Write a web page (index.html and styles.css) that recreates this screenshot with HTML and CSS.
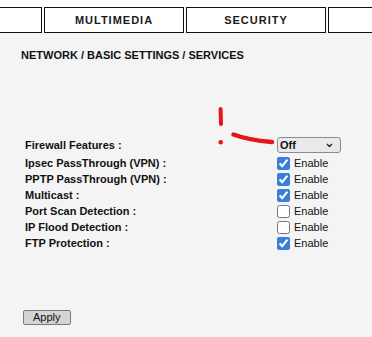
FILE: index.html
```html
<!DOCTYPE html>
<html lang="en">
<head>
<meta charset="UTF-8">
<title>Services</title>
<link rel="stylesheet" href="styles.css">
</head>
<body>
<div class="nav">
  <div class="tabs">
    <div class="tab"></div>
    <div class="tab">MULTIMEDIA</div>
    <div class="tab">SECURITY</div>
    <div class="tab"></div>
  </div>
</div>

<div class="content">
  <h1 class="crumb">NETWORK / BASIC SETTINGS / SERVICES</h1>

  <form class="form">
    <div class="row row-first">
      <label>Firewall Features :</label>
      <div class="pick">
        <select class="select">
          <option>Off</option>
          <option>On</option>
        </select>
        <svg class="chev" width="7" height="5" viewBox="0 0 7 5"><path d="M1 1 L3.5 3.5 L6 1" fill="none" stroke="#222" stroke-width="1.3"/></svg>
      </div>
    </div>
    <div class="row">
      <label>Ipsec PassThrough (VPN) :</label>
      <div class="opt"><input type="checkbox" checked><span>Enable</span></div>
    </div>
    <div class="row">
      <label>PPTP PassThrough (VPN) :</label>
      <div class="opt"><input type="checkbox" checked><span>Enable</span></div>
    </div>
    <div class="row">
      <label>Multicast :</label>
      <div class="opt"><input type="checkbox" checked><span>Enable</span></div>
    </div>
    <div class="row">
      <label>Port Scan Detection :</label>
      <div class="opt"><input type="checkbox"><span>Enable</span></div>
    </div>
    <div class="row">
      <label>IP Flood Detection :</label>
      <div class="opt"><input type="checkbox"><span>Enable</span></div>
    </div>
    <div class="row">
      <label>FTP Protection :</label>
      <div class="opt"><input type="checkbox" checked><span>Enable</span></div>
    </div>

    <button type="button" class="apply">Apply</button>
  </form>
</div>

<!-- hand drawn mark -->
<svg class="mark" width="70" height="50" viewBox="0 0 70 50">
  <path d="M10.6 9 L11 24" fill="none" stroke="#e8131b" stroke-width="4" stroke-linecap="round"/>
  <circle cx="10.7" cy="42.3" r="2.3" fill="#e8131b"/>
  <path d="M23.5 34.5 Q38 40 62 42" fill="none" stroke="#e8131b" stroke-width="4.5" stroke-linecap="round"/>
</svg>
</body>
</html>
```

FILE: styles.css
```css
body{
  margin: 0;
  background: #f4f4f4;
  color: #111;
  font-family: "Liberation Sans", Arial, sans-serif;
  font-size: 11px;
  position: relative;
}
.nav{
  overflow: hidden;
  background: #fff;
}
.tabs{
  display: flex;
  gap: 2px;
  margin-left: -98px;
  padding-top: 7px;
}
.tab{
  flex: 0 0 140px;
  height: 26px;
  box-sizing: border-box;
  border: 1px solid #111;
  background: #fff;
  display: flex;
  align-items: center;
  justify-content: center;
  font-weight: bold;
  letter-spacing: 1px;
  color: #1a1a1a;
}
.content{
  padding-left: 21px;
}
.crumb{
  margin: 16px 0 0;
  font-size: 11px;
  line-height: 13px;
  font-weight: bold;
}
.form{
  margin: 75px 0 0 4px;
}
.row{
  display: grid;
  grid-template-columns: 252px auto;
  align-items: center;
  height: 16px;
}
.row-first{
  margin-bottom: 2px;
}
.row label{
  font-weight: bold;
  line-height: 16px;
}
.pick{
  position: relative;
  width: 64px;
}
.select{
  appearance: none;
  -webkit-appearance: none;
  width: 64px;
  height: 16px;
  margin: 0;
  padding: 0 0 0 2px;
  border: 1px solid #8c8c8c;
  border-radius: 3px;
  background: #e9e9ed;
  font-family: inherit;
  font-size: 11px;
  font-weight: bold;
  color: #111;
}
.chev{
  position: absolute;
  left: 49px;
  top: 6px;
  pointer-events: none;
}
.opt{
  display: flex;
  align-items: center;
  gap: 4px;
}
.opt input{
  width: 13px;
  height: 13px;
  margin: 0;
  accent-color: #3b7dd8;
}
.apply{
  display: block;
  margin: 59px 0 0 -2px;
  height: 15px;
  padding: 0 9px;
  border: 1px solid #7a7a7a;
  border-radius: 2px;
  background: #d4d4d4;
  font-family: inherit;
  font-size: 11px;
  line-height: 13px;
  color: #111;
}
.mark{
  position: absolute;
  left: 210px;
  top: 100px;
}
```
